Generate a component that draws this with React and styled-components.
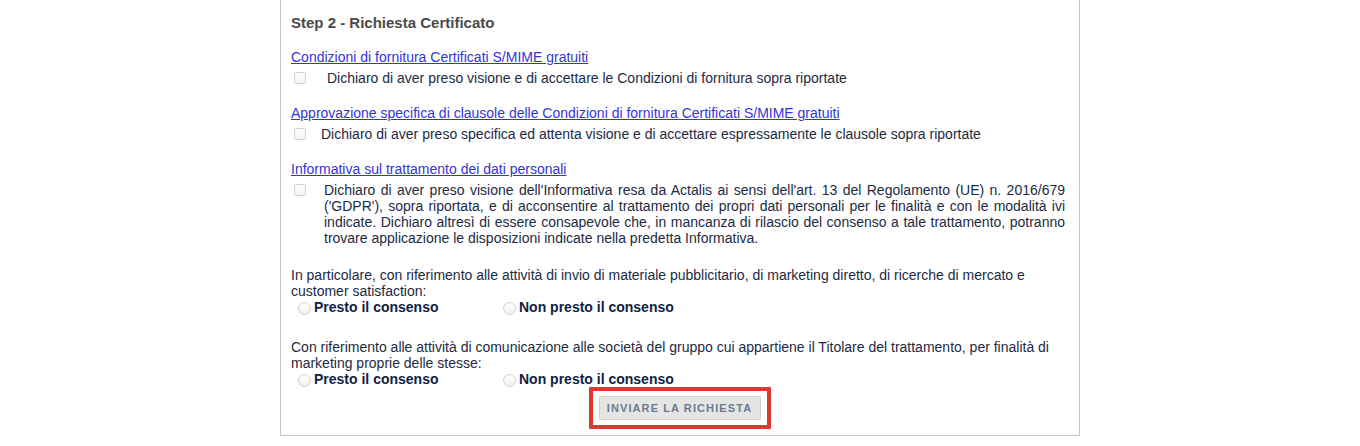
import styled, { createGlobalStyle } from 'styled-components';

const GlobalStyle = createGlobalStyle`
  html, body {
    margin: 0;
    padding: 0;
    background: #ffffff;
  }
  body {
    font-family: "Liberation Sans", Arial, Helvetica, sans-serif;
    font-size: 14px;
    line-height: 16px;
    color: #1d2a3f;
  }
`;

const App = () => {
  return (
    <Page>
      <GlobalStyle />
      <Panel>
        <Heading>Step 2 - Richiesta Certificato</Heading>

        <Section $gap={18}>
          <DocLink href="#">Condizioni di fornitura Certificati S/MIME gratuiti</DocLink>
          <CheckRow>
            <Box type="checkbox" />
            <CheckText $indent={21}>
              Dichiaro di aver preso visione e di accettare le Condizioni di fornitura sopra riportate
            </CheckText>
          </CheckRow>
        </Section>

        <Section>
          <DocLink href="#">
            Approvazione specifica di clausole delle Condizioni di fornitura Certificati S/MIME gratuiti
          </DocLink>
          <CheckRow>
            <Box type="checkbox" />
            <CheckText $indent={15}>
              Dichiaro di aver preso specifica ed attenta visione e di accettare espressamente le clausole sopra riportate
            </CheckText>
          </CheckRow>
        </Section>

        <Section>
          <DocLink href="#">Informativa sul trattamento dei dati personali</DocLink>
          <CheckRow>
            <Box type="checkbox" />
            <CheckText $indent={18} $justify>
              Dichiaro di aver preso visione dell'Informativa resa da Actalis ai sensi dell'art. 13 del
              Regolamento (UE) n. 2016/679 ('GDPR'), sopra riportata, e di acconsentire al trattamento dei
              propri dati personali per le finalità e con le modalità ivi indicate. Dichiaro altresì di
              essere consapevole che, in mancanza di rilascio del consenso a tale trattamento, potranno
              trovare applicazione le disposizioni indicate nella predetta Informativa.
            </CheckText>
          </CheckRow>
        </Section>

        <Section $gap={21}>
          <Para>
            In particolare, con riferimento alle attività di invio di materiale pubblicitario, di marketing
            diretto, di ricerche di mercato e customer satisfaction:
          </Para>
          <RadioRow>
            <Option>
              <Radio type="radio" name="marketing" />
              <OptionLabel>Presto il consenso</OptionLabel>
            </Option>
            <Option>
              <Radio type="radio" name="marketing" />
              <OptionLabel>Non presto il consenso</OptionLabel>
            </Option>
          </RadioRow>
        </Section>

        <Section $gap={24}>
          <Para>
            Con riferimento alle attività di comunicazione alle società del gruppo cui appartiene il
            Titolare del trattamento, per finalità di marketing proprie delle stesse:
          </Para>
          <RadioRow>
            <Option>
              <Radio type="radio" name="gruppo" />
              <OptionLabel>Presto il consenso</OptionLabel>
            </Option>
            <Option>
              <Radio type="radio" name="gruppo" />
              <OptionLabel>Non presto il consenso</OptionLabel>
            </Option>
          </RadioRow>
        </Section>

        <Actions>
          <Highlight>
            <SubmitButton type="button">Inviare la richiesta</SubmitButton>
          </Highlight>
        </Actions>
      </Panel>
    </Page>
  );
};

export default App;

const Page = styled.div`
  width: 100%;
  height: 446px;
  overflow: hidden;
`;

const Panel = styled.div`
  box-sizing: border-box;
  width: 800px;
  margin: 0 auto;
  padding: 15px 14px 6px 10px;
  border: 1px solid #c6c6c6;
  border-top: none;
  background: #ffffff;
`;

const Heading = styled.h3`
  margin: 0;
  font-size: 15px;
  line-height: 16px;
  font-weight: bold;
  color: #4a4a4a;
`;

const Section = styled.div`
  margin-top: ${(p) => (p.$gap ? p.$gap : 19)}px;
`;

const DocLink = styled.a`
  display: block;
  width: max-content;
  color: #3535d6;
  text-decoration: underline;
  line-height: 16px;
`;

const CheckRow = styled.div`
  display: flex;
  align-items: flex-start;
  margin-top: 5px;
`;

const Box = styled.input`
  appearance: none;
  flex: none;
  box-sizing: border-box;
  width: 12px;
  height: 12px;
  margin: 2px 0 0 3px;
  border: 1px solid #d4d4d4;
  border-radius: 2px;
  background: linear-gradient(#ffffff, #f3f3f3);
`;

const CheckText = styled.div`
  padding-left: ${(p) => p.$indent}px;
  text-align: ${(p) => (p.$justify ? 'justify' : 'left')};
  white-space: ${(p) => (p.$justify ? 'normal' : 'nowrap')};
`;

const Para = styled.p`
  margin: 0;
`;

const RadioRow = styled.div`
  display: flex;
  height: 16px;
`;

const Option = styled.label`
  display: flex;
  align-items: flex-start;
  width: 205px;
  &:first-child {
    margin-left: 7px;
  }
`;

const Radio = styled.input`
  appearance: none;
  flex: none;
  box-sizing: border-box;
  width: 13px;
  height: 13px;
  margin: 3px 3px 0 0;
  border: 1px solid #d0d0d0;
  border-radius: 50%;
  background: linear-gradient(#ffffff, #f0f0f0);
`;

const OptionLabel = styled.span`
  font-weight: bold;
  color: #102244;
`;

const Actions = styled.div`
  display: flex;
  justify-content: center;
  padding-left: 3px;
`;

const Highlight = styled.div`
  display: flex;
  padding: 5px 6px;
  border: 4px solid #dc3a2e;
`;

const SubmitButton = styled.button`
  box-sizing: border-box;
  width: 162px;
  height: 24px;
  padding: 0;
  border: 1px solid #d2d2d2;
  background: #e5e5e5;
  font-family: "Liberation Sans", Arial, sans-serif;
  font-size: 11px;
  font-weight: bold;
  letter-spacing: 1.1px;
  text-transform: uppercase;
  color: #6d7a8d;
  cursor: pointer;
`;
